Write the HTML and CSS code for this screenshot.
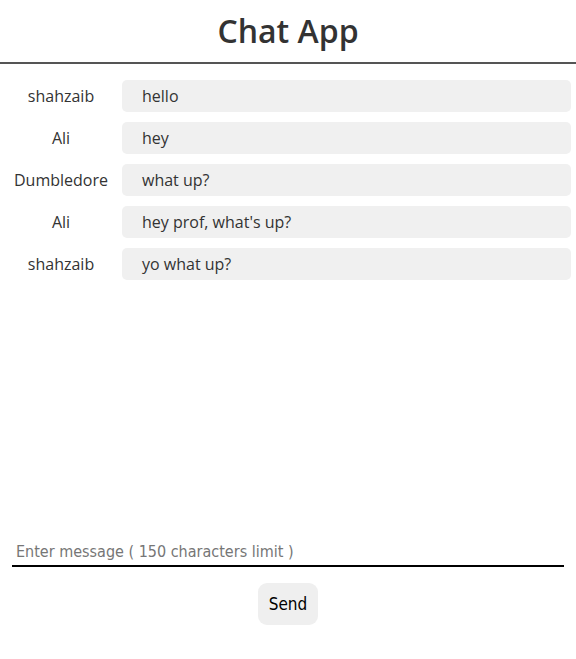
FILE: index.html
```html
<!DOCTYPE html>
<html>
<head>
<meta charset="utf-8">
<link rel="stylesheet" href="styles.css">
</head>
<body>
<div class="app">
  <header class="header"><h1 class="title">Chat App</h1></header>
  <main class="messages">
    <div class="msg"><span class="name">shahzaib</span><div class="bubble">hello</div></div>
    <div class="msg"><span class="name">Ali</span><div class="bubble">hey</div></div>
    <div class="msg"><span class="name">Dumbledore</span><div class="bubble">what up?</div></div>
    <div class="msg"><span class="name">Ali</span><div class="bubble">hey prof, what's up?</div></div>
    <div class="msg"><span class="name">shahzaib</span><div class="bubble">yo what up?</div></div>
  </main>
  <form class="composer">
    <input class="input" type="text" placeholder="Enter message ( 150 characters limit )">
    <button class="send" type="button">Send</button>
  </form>
</div>
</body>
</html>
```
FILE: styles.css
```css
html, body { margin: 0; padding: 0; background: #fff; }
body { font-family: "Open Sans", sans-serif; color: #333; }
.app { display: flex; flex-direction: column; height: 659px; }
.header { height: 62px; border-bottom: 2px solid #555; display: flex; align-items: center; justify-content: center; }
.title { margin: 0; font-size: 32px; font-weight: 600; color: #333; line-height: 1; }
.messages { flex: 1; display: flex; flex-direction: column; gap: 10px; padding: 16px 5px 0 5px; }
.msg { display: flex; align-items: center; gap: 5px; }
.name { width: 112px; text-align: center; font-size: 16px; }
.bubble { flex: 1; height: 32px; display: flex; align-items: center; padding-left: 20px; background: #f0f0f0; border-radius: 5px; font-size: 16px; }
.composer { display: flex; flex-direction: column; align-items: center; padding: 0 12px 34px 12px; }
.input { align-self: stretch; border: none; border-bottom: 2px solid #000; outline: none; font-family: "DejaVu Sans Condensed", "DejaVu Sans", sans-serif; font-size: 16px; padding: 8px 4px 4px 4px; height: 34px; box-sizing: border-box; background: transparent; color: #000; }
.input::placeholder { color: #767676; }
.send { margin-top: 16px; width: 60px; height: 42px; border: none; border-radius: 9px; background: #efefef; font-family: "DejaVu Sans Condensed", "DejaVu Sans", sans-serif; font-size: 17px; color: #000; padding: 0; }
```
